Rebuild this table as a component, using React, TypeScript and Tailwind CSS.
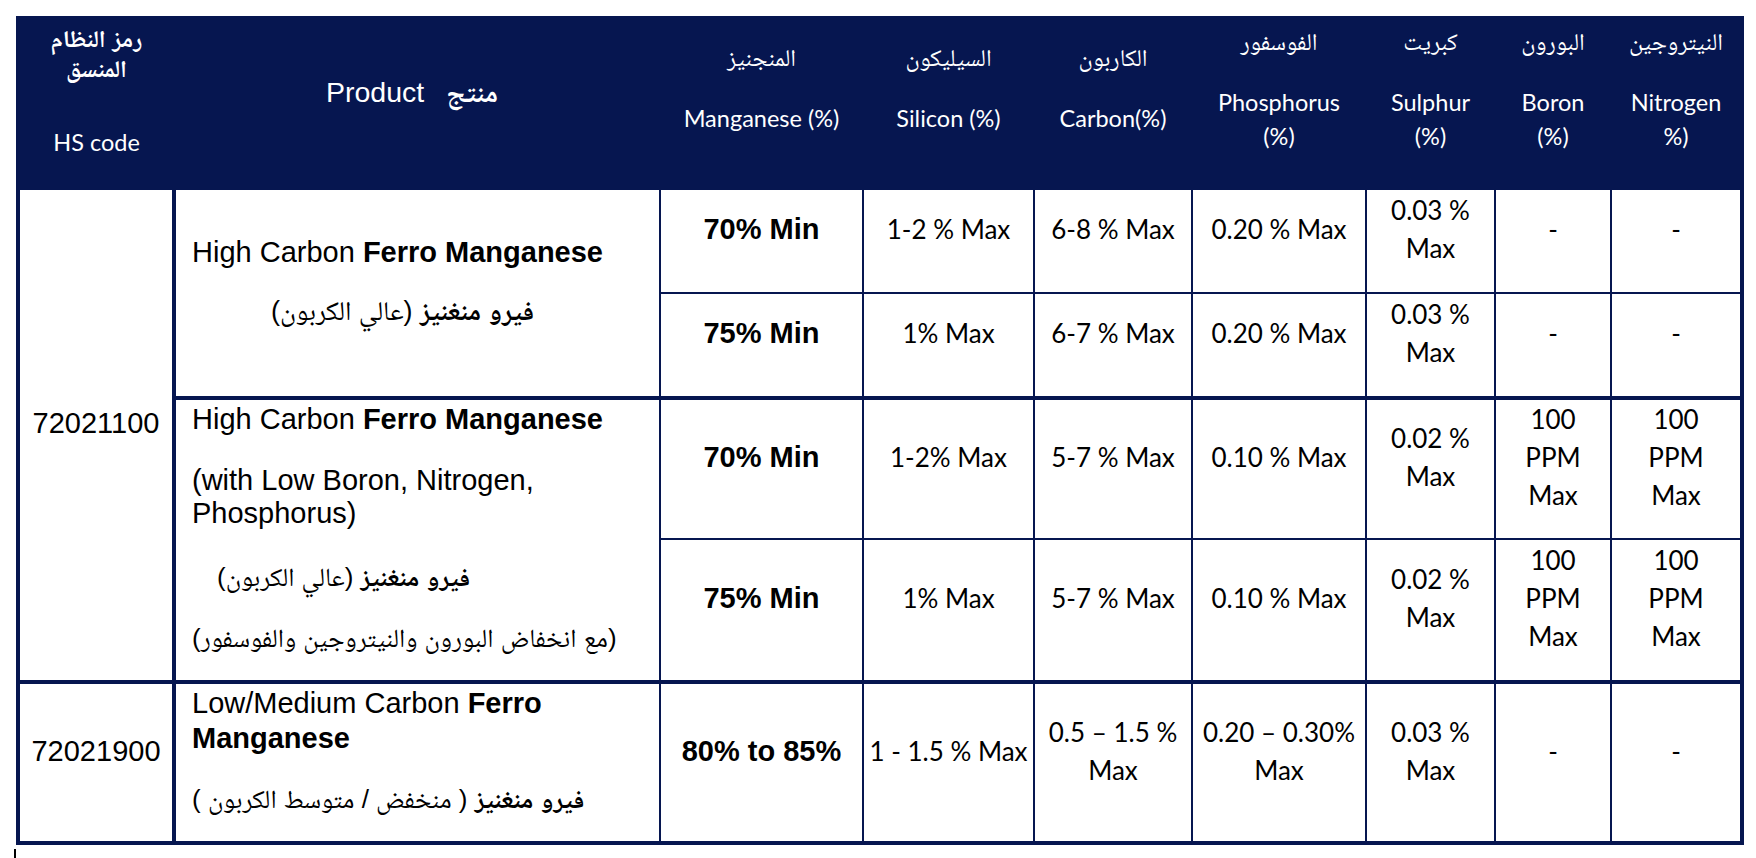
const arial = "font-['Liberation_Sans','Noto_Naskh_Arabic','Noto_Sans_Arabic','DejaVu_Sans',sans-serif]";
const calibri = "font-['Lato','Noto_Naskh_Arabic','Noto_Sans_Arabic','DejaVu_Sans',sans-serif]";

const HeadCell = ({ ar, en, tall }: { ar: string; en: string[]; tall?: boolean }) => (
  <td className={`align-top text-center border-2 border-[#061650] ${tall ? 'pt-[5px]' : 'pt-[21px]'}`}>
    <div className={`${arial} text-[24px] leading-[34px]`}>{ar}</div>
    <div className="h-[26px]" />
    {en.map((l) => (
      <div key={l} className={`${calibri} text-[23.5px] leading-[34px]`}>
        {l}
      </div>
    ))}
  </td>
);

const Val = ({ lines, first, nowrap }: { lines: string[]; first?: boolean; nowrap?: boolean }) => (
  <td
    className={`${calibri} text-[26px] leading-[38px] text-center align-middle pb-[24px] px-[2px] border-2 border-[#061650] ${
      first ? 'border-t-4' : ''
    } ${nowrap ? 'whitespace-nowrap' : ''}`}
  >
    {lines.map((l, i) => (
      <div key={i}>{l}</div>
    ))}
  </td>
);

const Mn = ({ text, first }: { text: string; first?: boolean }) => (
  <td
    className={`${arial} font-bold text-[29px] leading-[34px] text-center align-middle pb-[24px] border-2 border-[#061650] ${
      first ? 'border-t-4' : ''
    }`}
  >
    {text}
  </td>
);

export default function App() {
  return (
    <div className="bg-white min-h-[858px] text-black">
      <table className="mt-[16px] ml-[16px] border-collapse table-fixed border-4 border-[#061650] w-[1724px]">
        <colgroup>
          <col className="w-[156px]" />
          <col className="w-[486px]" />
          <col className="w-[203px]" />
          <col className="w-[171px]" />
          <col className="w-[158px]" />
          <col className="w-[174px]" />
          <col className="w-[129px]" />
          <col className="w-[116px]" />
          <col className="w-[131px]" />
        </colgroup>
        <tbody>
          <tr className="h-[171px] bg-[#061650] text-white">
            <td className="align-top text-center pt-[4px] border-2 border-[#061650]">
              <div className={`${arial} font-bold text-[24px] leading-[30px]`}>رمز النظام</div>
              <div className={`${arial} font-bold text-[24px] leading-[30px]`}>المنسق</div>
              <div className="h-[41px]" />
              <div className={`${calibri} text-[23.5px] leading-[34px]`}>HS code</div>
            </td>
            <td className="align-top text-center pt-[55px] pr-[10px] border-2 border-[#061650]">
              <span className={`${arial} text-[28.5px] leading-[34px]`}>Product</span>
              <span className={`${arial} font-bold text-[28px] leading-[34px] ml-[22px]`}>منتج</span>
            </td>
            <HeadCell ar="المنجنيز" en={['Manganese (%)']} />
            <HeadCell ar="السيليكون" en={['Silicon (%)']} />
            <HeadCell ar="الكاربون" en={['Carbon(%)']} />
            <HeadCell ar="الفوسفور" en={['Phosphorus', '(%)']} tall />
            <HeadCell ar="كبريت" en={['Sulphur', '(%)']} tall />
            <HeadCell ar="البورون" en={['Boron', '(%)']} tall />
            <HeadCell ar="النيتروجين" en={['Nitrogen', '%)']} tall />
          </tr>

          <tr className="h-[104px]">
            <td
              rowSpan={4}
              className={`${arial} text-[29px] leading-[34px] text-center align-middle pb-[24px] border-2 border-r-4 border-[#061650]`}
            >
              72021100
            </td>
            <td
              rowSpan={2}
              className={`${arial} text-[29px] align-middle pb-[24px] pl-[16px] pr-[8px] border-2 border-[#061650]`}
            >
              <p className="leading-[34px]">
                High Carbon <b>Ferro Manganese</b>
              </p>
              <p className="mt-[25px] pl-[79px] text-left text-[27px] leading-[34px]">
                <span dir="rtl">
                  <b>فيرو منغنيز</b> (عالي الكربون)
                </span>
              </p>
            </td>
            <Mn text="70% Min" />
            <Val lines={['1-2 % Max']} />
            <Val lines={['6-8 % Max']} />
            <Val lines={['0.20 % Max']} />
            <Val lines={['0.03 %', 'Max']} />
            <Val lines={['-']} />
            <Val lines={['-']} />
          </tr>

          <tr className="h-[105px]">
            <Mn text="75% Min" />
            <Val lines={['1% Max']} />
            <Val lines={['6-7 % Max']} />
            <Val lines={['0.20 % Max']} />
            <Val lines={['0.03 %', 'Max']} />
            <Val lines={['-']} />
            <Val lines={['-']} />
          </tr>

          <tr className="h-[141px]">
            <td
              rowSpan={2}
              className={`${arial} text-[29px] align-middle pb-[24px] pl-[16px] pr-[8px] border-2 border-t-4 border-[#061650]`}
            >
              <p className="leading-[34px]">
                High Carbon <b>Ferro Manganese</b>
              </p>
              <p className="mt-[28px] leading-[33px]">(with Low Boron, Nitrogen, Phosphorus)</p>
              <p className="mt-[30px] pl-[25px] text-left text-[26px] leading-[34px]">
                <span dir="rtl">
                  <b>فيرو منغنيز</b> (عالي الكربون)
                </span>
              </p>
              <p className="mt-[27px] text-left text-[26px] leading-[34px]">
                <span dir="rtl">(مع انخفاض البورون والنيتروجين والفوسفور)</span>
              </p>
            </td>
            <Mn text="70% Min" first />
            <Val lines={['1-2% Max']} first />
            <Val lines={['5-7 % Max']} first />
            <Val lines={['0.10 % Max']} first />
            <Val lines={['0.02 %', 'Max']} first />
            <Val lines={['100', 'PPM', 'Max']} first />
            <Val lines={['100', 'PPM', 'Max']} first />
          </tr>

          <tr className="h-[143px]">
            <Mn text="75% Min" />
            <Val lines={['1% Max']} />
            <Val lines={['5-7 % Max']} />
            <Val lines={['0.10 % Max']} />
            <Val lines={['0.02 %', 'Max']} />
            <Val lines={['100', 'PPM', 'Max']} />
            <Val lines={['100', 'PPM', 'Max']} />
          </tr>

          <tr className="h-[161px]">
            <td
              className={`${arial} text-[29px] leading-[34px] text-center align-middle pb-[24px] border-2 border-t-4 border-r-4 border-[#061650]`}
            >
              72021900
            </td>
            <td
              className={`${arial} text-[29px] align-middle pb-[24px] pl-[16px] pr-[8px] border-2 border-t-4 border-[#061650]`}
            >
              <p className="leading-[35px]">
                Low/Medium Carbon <b>Ferro Manganese</b>
              </p>
              <p className="mt-[26px] text-left text-[26px] leading-[34px]">
                <span dir="rtl">
                  <b>فيرو منغنيز</b> ( منخفض / متوسط الكربون )
                </span>
              </p>
            </td>
            <Mn text="80% to 85%" first />
            <Val lines={['1 - 1.5 % Max']} first nowrap />
            <Val lines={['0.5 – 1.5 %', 'Max']} first />
            <Val lines={['0.20 – 0.30%', 'Max']} first nowrap />
            <Val lines={['0.03 %', 'Max']} first />
            <Val lines={['-']} first />
            <Val lines={['-']} first />
          </tr>
        </tbody>
      </table>
      <div className="ml-[14px] mt-[4px] w-[2px] h-[10px] bg-black" />
    </div>
  );
}
